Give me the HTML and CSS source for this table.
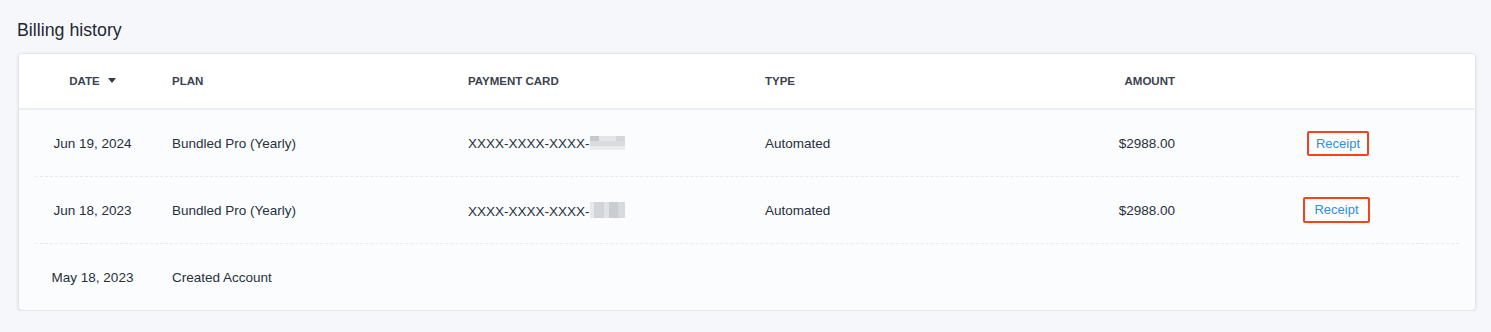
FILE: index.html
```html
<!DOCTYPE html>
<html lang="en">
<head>
  <meta charset="UTF-8">
  <meta name="viewport" content="width=device-width, initial-scale=1.0">
  <title>Billing history</title>

  <link rel="stylesheet" href="styles.css">
</head>
<body>
<div class="page">
  <h2 class="title">Billing history</h2>

  <div class="card">
    <div class="row head">
      <div class="c-date">DATE <span class="sort"></span></div>
      <div class="c-plan">PLAN</div>
      <div class="c-card">PAYMENT CARD</div>
      <div class="c-type">TYPE</div>
      <div class="c-amount">AMOUNT</div>
      <div class="c-link"></div>
    </div>

    <div class="row">
      <div class="c-date">Jun 19, 2024</div>
      <div class="c-plan">Bundled Pro (Yearly)</div>
      <div class="c-card">XXXX-XXXX-XXXX-<span class="blur blur-a"></span></div>
      <div class="c-type">Automated</div>
      <div class="c-amount">$2988.00</div>
      <div class="c-link"><a class="receipt" href="#">Receipt</a></div>
    </div>

    <div class="row">
      <div class="c-date">Jun 18, 2023</div>
      <div class="c-plan">Bundled Pro (Yearly)</div>
      <div class="c-card">XXXX-XXXX-XXXX-<span class="blur blur-b"></span></div>
      <div class="c-type">Automated</div>
      <div class="c-amount">$2988.00</div>
      <div class="c-link"><a class="receipt wide" href="#">Receipt</a></div>
    </div>

    <div class="row">
      <div class="c-date">May 18, 2023</div>
      <div class="c-plan">Created Account</div>
      <div class="c-card"></div>
      <div class="c-type"></div>
      <div class="c-amount"></div>
      <div class="c-link"></div>
    </div>
  </div>
</div>
</body>
</html>
```

FILE: styles.css
```css
body {
  margin: 0;
  background: #f6f7fa;
  font-family: "Liberation Sans", Arial, sans-serif;
  color: #27303b;
}
.page {
  padding: 20px 15px 0 18px;
}
.title {
  margin: 0 0 13px -1px;
  font-size: 17.8px;
  font-weight: 400;
  line-height: 20px;
  color: #1f2933;
}
.card {
  background: #fbfcfe;
  border: 1px solid #e3e6ec;
  border-radius: 4px;
  box-shadow: 0 1px 3px rgba(30, 40, 60, 0.12);
  overflow: hidden;
}
.row {
  display: grid;
  grid-template-columns: 137px 296px 297px 253px 157px 1fr;
  align-items: center;
  height: 66px;
  margin: 0 16px;
  font-size: 13.5px;
  border-bottom: 1px dashed #e8eaef;
}
.row:last-child {
  border-bottom: none;
}
.row.head {
  height: 54px;
  margin: 0;
  padding: 0 16px;
  background: #fff;
  border-bottom: 2px solid #eceef3;
  font-size: 11.5px;
  font-weight: 700;
  color: #3a424d;
}
.c-date {
  text-align: center;
  padding-right: 22px;
}
.c-amount {
  text-align: right;
}
.c-link {
  text-align: center;
  padding-left: 42px;
}
.sort {
  display: inline-block;
  width: 0;
  height: 0;
  margin-left: 5px;
  vertical-align: 2px;
  border-left: 4px solid transparent;
  border-right: 4px solid transparent;
  border-top: 5px solid #333b46;
}
.blur {
  display: inline-block;
  width: 35px;
  height: 14px;
  vertical-align: -2px;
}
.blur-a {
  background:
    linear-gradient(180deg, transparent 0 35%, #d9dbdf 35% 70%, #e9ebed 70%),
    linear-gradient(90deg, #c5c8cd 0 25%, #e2e4e7 25% 75%, #d3d6da 75%);
}
.blur-b {
  height: 16px;
  background:
    linear-gradient(90deg, #e6e8eb 0 12%, #d1d4d8 12% 40%, #e0e2e5 40% 55%, #c9ccd1 55% 80%, #d6d9dd 80%);
}
.receipt {
  display: inline-block;
  padding: 3px 7px;
  border: 2px solid #f0441f;
  border-radius: 2px;
  color: #2f8ee5;
  text-decoration: none;
  font-size: 13px;
}
.receipt.wide {
  padding: 3px 9px 4px;
  margin-left: -3px;
}
```
